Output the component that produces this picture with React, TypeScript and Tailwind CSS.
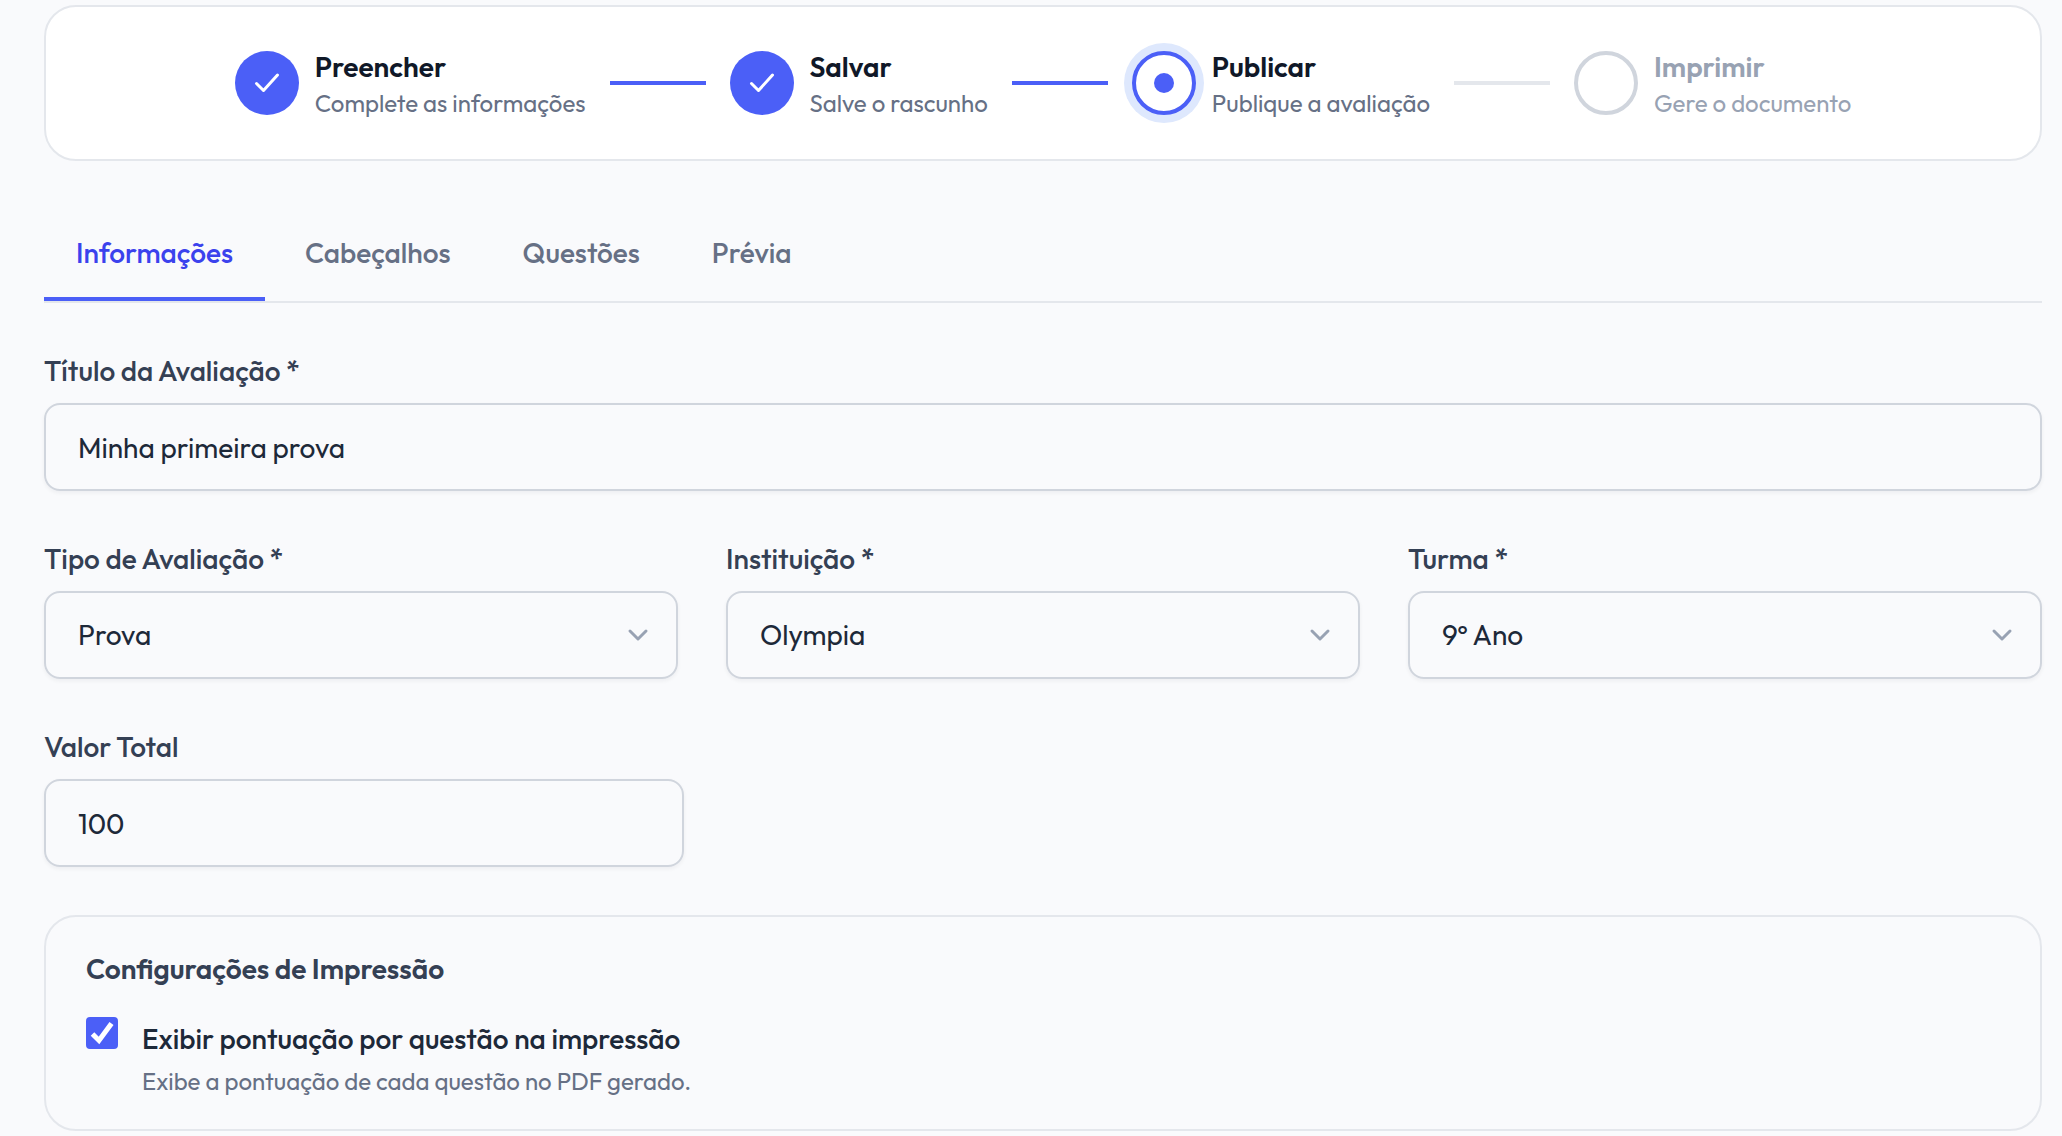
import React, { useState } from "react";

type StepState = "done" | "current" | "pending";

const steps: { title: string; description: string; state: StepState }[] = [
  { title: "Preencher", description: "Complete as informações", state: "done" },
  { title: "Salvar", description: "Salve o rascunho", state: "done" },
  { title: "Publicar", description: "Publique a avaliação", state: "current" },
  { title: "Imprimir", description: "Gere o documento", state: "pending" },
];

const tabs = ["Informações", "Cabeçalhos", "Questões", "Prévia"];

const fieldClass =
  "block w-full h-[88px] rounded-2xl border-2 border-[#d0d5dd] bg-transparent px-8 text-[28px] leading-10 text-[#1d2939] shadow-[0_2px_4px_rgba(16,24,40,0.05)] outline-none focus:border-[#4b5ff7]";
const labelClass = "mb-3 block text-[28px] font-medium leading-10 text-[#344054]";

const StepCircle = ({ state }: { state: StepState }) => {
  if (state === "done") {
    return (
      <div className="flex size-16 shrink-0 items-center justify-center rounded-full bg-[#4b5ff7]">
        <svg className="size-10" viewBox="0 0 40 40" fill="none" stroke="white" strokeWidth="3" strokeLinecap="round" strokeLinejoin="round">
          <path d="M9.5 20.5L16.5 27.5L30.5 12" />
        </svg>
      </div>
    );
  }
  if (state === "current") {
    return (
      <div className="flex size-16 shrink-0 items-center justify-center rounded-full border-4 border-[#4b5ff7] bg-white ring-8 ring-[#dee8fd]">
        <div className="size-5 rounded-full bg-[#4b5ff7]"></div>
      </div>
    );
  }
  return <div className="size-16 shrink-0 rounded-full border-4 border-[#d0d5dd] bg-white"></div>;
};

const Stepper = () => (
  <ol className="flex items-center justify-center rounded-[32px] border-2 border-[#e4e7ec] bg-white px-10 py-10">
    {steps.map((step, index) => (
      <li key={step.title} className="flex items-center">
        {index > 0 && (
          <div className={step.state === "pending" ? "mx-6 h-1 w-24 bg-[#e4e7ec]" : "mx-6 h-1 w-24 bg-[#4b5ff7]"}></div>
        )}
        <StepCircle state={step.state} />
        <div className="ml-4 whitespace-nowrap">
          <p className={step.state === "pending" ? "text-[28px] font-semibold leading-10 text-[#98a2b3]" : "text-[28px] font-semibold leading-10 text-[#101828]"}>
            {step.title}
          </p>
          <p className={step.state === "pending" ? "text-2xl leading-8 text-[#98a2b3]" : "text-2xl leading-8 text-[#667085]"}>
            {step.description}
          </p>
        </div>
      </li>
    ))}
  </ol>
);

const SelectField = ({ id, label, options }: { id: string; label: string; options: string[] }) => (
  <div>
    <label htmlFor={id} className={labelClass}>{label}</label>
    <div className="relative">
      <select id={id} className={`${fieldClass} appearance-none`}>
        {options.map((option) => (
          <option key={option}>{option}</option>
        ))}
      </select>
      <svg className="pointer-events-none absolute right-5 top-6 size-10" viewBox="0 0 20 20" fill="none" stroke="#98a2b3" strokeWidth="1.5" strokeLinecap="round" strokeLinejoin="round">
        <path d="M6 8l4 4 4-4" />
      </svg>
    </div>
  </div>
);

const App = () => {
  const [activeTab, setActiveTab] = useState("Informações");
  const [title, setTitle] = useState("Minha primeira prova");
  const [total, setTotal] = useState("100");
  const [showScore, setShowScore] = useState(true);

  return (
    <div className="min-h-screen bg-[#f9fafc] pb-1 pl-11 pr-5 pt-[5px] font-['Outfit','Lato',sans-serif]">
      <Stepper />

      {/* Tabs */}
      <div role="tablist" className="mt-12 flex gap-2 border-b-2 border-[#e4e7ec]">
        {tabs.map((tab) => (
          <button
            key={tab}
            type="button"
            role="tab"
            aria-selected={tab === activeTab}
            onClick={() => setActiveTab(tab)}
            className={
              tab === activeTab
                ? "border-b-4 border-[#4b5ff7] px-8 py-6 text-[28px] font-medium leading-10 text-[#3b42ed]"
                : "border-b-4 border-transparent px-8 py-6 text-[28px] font-medium leading-10 text-[#667085]"
            }
          >
            {tab}
          </button>
        ))}
      </div>

      <form className="mt-12 space-y-12">
        <div>
          <label htmlFor="titulo" className={labelClass}>Título da Avaliação *</label>
          <input id="titulo" type="text" value={title} onChange={(e) => setTitle(e.target.value)} className={fieldClass} />
        </div>

        <div className="grid grid-cols-3 gap-12">
          <SelectField id="tipo" label="Tipo de Avaliação *" options={["Prova", "Simulado", "Trabalho"]} />
          <SelectField id="instituicao" label="Instituição *" options={["Olympia"]} />
          <SelectField id="turma" label="Turma *" options={["9º Ano", "8º Ano", "7º Ano"]} />
        </div>

        <div className="max-w-[640px]">
          <label htmlFor="valor" className={labelClass}>Valor Total</label>
          <input id="valor" type="text" inputMode="numeric" value={total} onChange={(e) => setTotal(e.target.value)} className={fieldClass} />
        </div>

        {/* Print settings */}
        <section className="rounded-[32px] border-2 border-[#e4e7ec] px-10 py-8">
          <h3 className="mb-6 text-[28px] font-semibold leading-10 text-[#344054]">Configurações de Impressão</h3>
          <div className="flex items-start gap-6">
            <div className="relative mt-1 size-8 shrink-0">
              <input
                id="pontuacao"
                type="checkbox"
                checked={showScore}
                onChange={(e) => setShowScore(e.target.checked)}
                className="block size-8 appearance-none rounded border-2 border-[#d0d5dd] bg-white checked:border-[#4b5ff7] checked:bg-[#4b5ff7]"
              />
              {showScore && (
                <svg className="pointer-events-none absolute inset-0 size-8" viewBox="0 0 32 32" fill="none" stroke="white" strokeWidth="5">
                  <path d="M6.5 17L13 23.5L25.5 6.5" />
                </svg>
              )}
            </div>
            <div className="flex flex-col gap-[6px] pt-[6px]">
              <label htmlFor="pontuacao" className="block text-[28px] font-medium leading-10 text-[#1d2939]">
                Exibir pontuação por questão na impressão
              </label>
              <p className="text-2xl leading-8 text-[#667085]">Exibe a pontuação de cada questão no PDF gerado.</p>
            </div>
          </div>
        </section>
      </form>
    </div>
  );
};

export default App;
